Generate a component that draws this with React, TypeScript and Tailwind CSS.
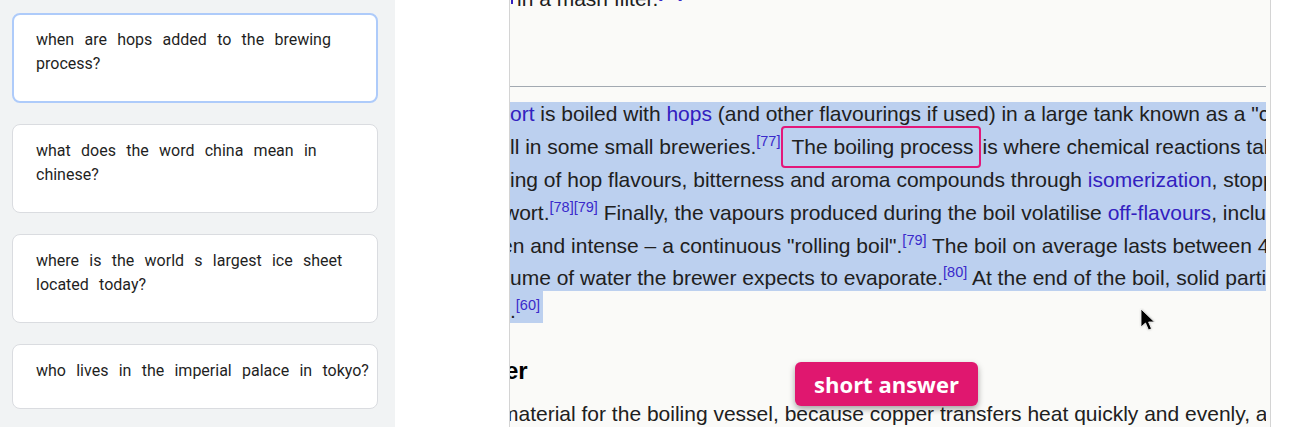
import React from "react";

const questions = [
  "when are hops added to the brewing process?",
  "what does the word china mean in chinese?",
  "where is the world s largest ice sheet located today?",
  "who lives in the imperial palace in tokyo?",
];

function L({ children }: { children: React.ReactNode }) {
  return <span className="text-[#3220bf]">{children}</span>;
}

function Sup({ children }: { children: React.ReactNode }) {
  return (
    <span className="relative -top-[8px] text-[14.5px] leading-none text-[#3a2acb]">
      {children}
    </span>
  );
}

function Line({ children, ml = 0 }: { children: React.ReactNode; ml?: number }) {
  return (
    <div className="h-[32.8px] shrink-0 leading-[32.8px] whitespace-nowrap overflow-visible">
      <span style={{ marginLeft: ml }}>{children}</span>
    </div>
  );
}

export default function App() {
  return (
    <div className="flex w-[1316px] h-[427px] overflow-hidden bg-white">
      {/* sidebar */}
      <div className="w-[395px] shrink-0 bg-[#f1f3f4] pl-[12px] pt-[13px] flex flex-col gap-[21px] font-['Roboto',sans-serif] text-[16px] leading-[24px] text-[#1f1f1f]">
        {questions.map((q, i) => (
          <div
            key={i}
            className={
              i === 0
                ? "w-[366px] shrink-0 rounded-[8px] bg-white border-2 border-[#aecbfa] pl-[22px] pr-[5px] pt-[13px] pb-[25px]"
                : "w-[366px] shrink-0 rounded-[8px] bg-white border border-[#dadce0] pl-[23px] pr-[6px] pt-[14px] pb-[25px]"
            }
          >
            <p className="[word-spacing:6.3px]">{q}</p>
          </div>
        ))}
      </div>

      {/* gap */}
      <div className="w-[114px] shrink-0 bg-white" />

      {/* article */}
      <div className="relative w-[762px] shrink-0 h-full border-x border-[#d4d4d4] bg-[#fafaf8] pr-[4px]">
        <div className="w-[756px] h-full overflow-hidden flex flex-col font-['Liberation_Sans',Arial,sans-serif] text-[21px] text-[#202020]">
          <div className="mt-[-17.5px] shrink-0">
            <Line ml={1}>
              <span className="inline-block w-[2px] h-[4px] align-top mt-[17px] bg-[#3220bf]" />
              <span className="ml-[4px]">in a mash filter.</span>
              <Sup>[75]</Sup>
            </Line>
          </div>
          <div className="mt-[70.7px] h-px shrink-0 w-full bg-[#a2a9b1]" />
          <div className="mt-[15px] h-[189px] shrink-0 bg-[#bcd0ef]">
            <div className="mt-[-3.5px]">
              <Line>
                <L>ort</L> is boiled with <L>hops</L> (and other flavourings if used) in a large tank known as a "copper" or brew kettle
              </Line>
              <Line>
                ll in some small breweries.<Sup>[77]</Sup>
                <span className="relative ml-[1px] mr-[2px] rounded-[4px] border-2 border-[#e3177a] pl-[8px] pr-[5px] pt-[7px] pb-[8px]">
                  The boiling process
                </span>
                is where chemical reactions take place, including
              </Line>
              <Line>
                ing of hop flavours, bitterness and aroma compounds through <L>isomerization</L>, stopping of enzymatic processes
              </Line>
              <Line ml={-6}>
                wort.<Sup>[78][79]</Sup> Finally, the vapours produced during the boil volatilise <L>off-flavours</L>, including dimethyl sulfide
              </Line>
              <Line ml={-9}>
                en and intense – a continuous "rolling boil".<Sup>[79]</Sup> The boil on average lasts between 45 and 90 minutes
              </Line>
              <Line>
                ume of water the brewer expects to evaporate.<Sup>[80]</Sup> At the end of the boil, solid particles in the hopped wort
              </Line>
            </div>
          </div>
          <div className="h-[32px] shrink-0">
            <div className="h-[32px] w-[33px] bg-[#bcd0ef] whitespace-nowrap">
              <div className="pt-[4.3px] leading-[32.8px] h-[32px]">
                .<Sup>[60]</Sup>
              </div>
            </div>
          </div>
          <div className="mt-[33.3px] h-[30px] shrink-0 leading-[30px] text-[24px] font-bold text-black whitespace-nowrap">
            <span className="ml-[-5px]">er</span>
          </div>
          <div className="mt-[12.2px] shrink-0">
            <Line ml={-9}>
              material for the boiling vessel, because copper transfers heat quickly and evenly, and
            </Line>
          </div>
        </div>

        {/* short answer badge */}
        <div className="absolute left-[285px] top-[362px] w-[183px] h-[44px] rounded-[6px] bg-[#e0176f] shadow-[0_3px_6px_rgba(0,0,0,0.35)] flex items-center justify-center">
          <span className="font-['Open_Sans',sans-serif] font-bold text-[22px] text-white leading-none">short answer</span>
        </div>

        {/* cursor */}
        <svg
          className="absolute left-[629px] top-[308px]"
          width="20"
          height="26"
          viewBox="0 0 20 26"
        >
          <defs>
            <filter id="blur" x="-50%" y="-50%" width="200%" height="200%">
              <feGaussianBlur stdDeviation="1.2" />
            </filter>
          </defs>
          <path
            d="M2 1 L2 19 L6.5 15 L9.5 22 L12.5 20.8 L9.6 14 L15.5 14 Z"
            fill="#777"
            opacity="0.6"
            filter="url(#blur)"
          />
          <path
            d="M2 1 L2 19 L6.5 15 L9.5 22 L12.5 20.8 L9.6 14 L15.5 14 Z"
            fill="#000"
            stroke="#fff"
            strokeWidth="0.8"
          />
        </svg>
      </div>

      <div className="flex-1 bg-white" />
    </div>
  );
}
